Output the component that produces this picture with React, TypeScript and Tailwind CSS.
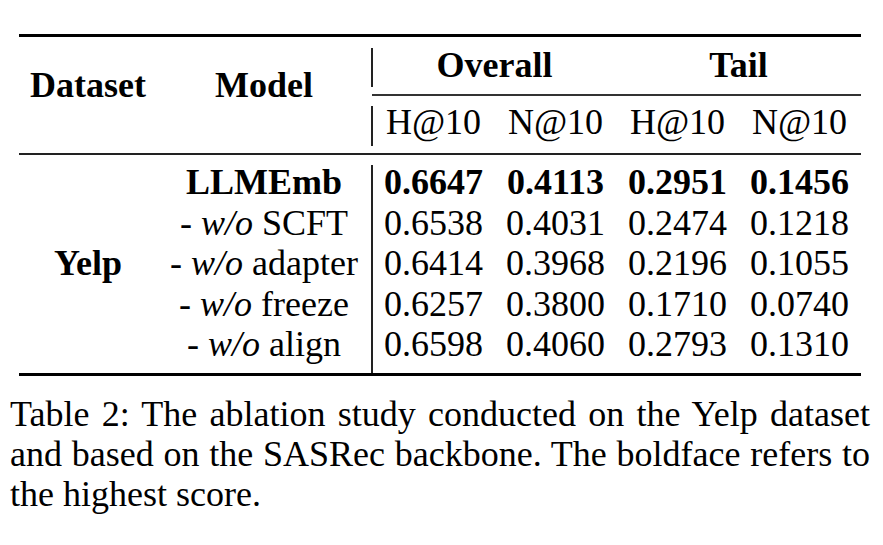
export default function App() {
  return (
    <div className="w-[883px] h-[545px] bg-white text-black overflow-hidden font-serif">
      <div className="pt-[34px] pl-[19px] w-[861px]">
        {/* top rule */}
        <div className="h-[3px] bg-black" />

        {/* header */}
        <div className="flex text-[36px]">
          <div className="w-[138px] pt-[27.5px] leading-[40px] text-center font-bold font-['Liberation_Serif']">Dataset</div>
          <div className="w-[214px] pt-[27.5px] leading-[40px] text-center font-bold font-['Liberation_Serif']">Model</div>
          <div className="flex flex-col">
            <div className="flex h-[57px]">
              <div className="w-[1.5px] bg-[#222] mt-[11px] mb-[7px]" />
              <div className="w-[244px] leading-[57px] text-center font-bold font-['Liberation_Serif']">Overall</div>
              <div className="w-[244px] leading-[57px] text-center font-bold font-['Liberation_Serif']">Tail</div>
            </div>
            <div className="h-[1.5px] bg-[#333] ml-[1px]" />
            <div className="flex h-[57.5px]">
              <div className="w-[1.5px] bg-[#222] mt-[10.5px] mb-[7px]" />
              {metrics.map((m, i) => (
                <div key={i} className="w-[122px] leading-[52px] text-center font-['Liberation_Serif']">
                  {m}
                </div>
              ))}
            </div>
          </div>
        </div>

        {/* mid rule */}
        <div className="h-[2px] bg-[#222]" />

        {/* body */}
        <div className="flex text-[36px]">
          <div className="w-[138px] pt-[7px] pb-[8.5px] flex items-center justify-center font-bold font-['Liberation_Serif']">Yelp</div>
          <div className="w-[214px] pt-[7px] pb-[8.5px] flex flex-col">
            {rows.map((r, i) => (
              <div key={i} className="h-[40.5px] leading-[40px] text-center whitespace-nowrap font-['Liberation_Serif']">
                {r.best ? (
                  <span className="font-bold font-['Liberation_Serif']">{r.model}</span>
                ) : (
                  <span className="font-['Liberation_Serif']">
                    - <i className="font-['Liberation_Serif']">w/o</i> {r.model}
                  </span>
                )}
              </div>
            ))}
          </div>
          <div className="w-[1.5px] bg-[#222] mt-[10px]" />
          <div className="pt-[7px] pb-[8.5px] flex flex-col">
            {rows.map((r, i) => (
              <div key={i} className={r.best ? "flex h-[40.5px] leading-[40px] font-bold" : "flex h-[40.5px] leading-[40px]"}>
                {r.values.map((v, j) => (
                  <div key={j} className="w-[122px] text-center font-['Liberation_Serif']">
                    {v}
                  </div>
                ))}
              </div>
            ))}
          </div>
        </div>

        {/* bottom rule */}
        <div className="h-[3px] bg-black" />
      </div>

      {/* caption */}
      <div className="mt-[18px] ml-[10px] w-[860px] text-[36px] leading-[40px]">
        <div className="text-justify [text-align-last:justify] whitespace-nowrap font-['Liberation_Serif']">
          Table 2: The ablation study conducted on the Yelp dataset
        </div>
        <div className="text-justify [text-align-last:justify] whitespace-nowrap font-['Liberation_Serif']">
          and based on the SASRec backbone. The boldface refers to
        </div>
        <div className="font-['Liberation_Serif']">the highest score.</div>
      </div>
    </div>
  );
}

const rows = [
  { model: "LLMEmb", values: ["0.6647", "0.4113", "0.2951", "0.1456"], best: true },
  { model: "SCFT", values: ["0.6538", "0.4031", "0.2474", "0.1218"] },
  { model: "adapter", values: ["0.6414", "0.3968", "0.2196", "0.1055"] },
  { model: "freeze", values: ["0.6257", "0.3800", "0.1710", "0.0740"] },
  { model: "align", values: ["0.6598", "0.4060", "0.2793", "0.1310"] },
];

const metrics = ["H\u004010", "N\u004010", "H\u004010", "N\u004010"];
